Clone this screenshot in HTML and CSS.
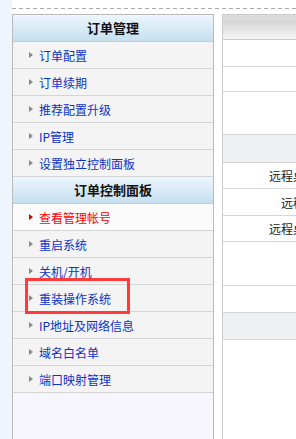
FILE: index.html
```html
<!DOCTYPE HTML>
<html lang="zh-CN">
<head>
  <meta http-equiv="Content-Type" content="text/html;charset=UTF-8">
  <title>订单管理</title>
  <link rel="stylesheet" href="styles.css">
</head>
<body>
  <div class="page">
    <div class="strip"></div>
    <div class="main">
      <div class="dash"></div>
      <div class="cols">
        <div class="menu">
          <div class="menu-head">订单管理</div>
          <a class="item" href="#">订单配置</a>
          <a class="item" href="#">订单续期</a>
          <a class="item" href="#">推荐配置升级</a>
          <a class="item" href="#">IP管理</a>
          <a class="item" href="#">设置独立控制面板</a>
          <div class="menu-head">订单控制面板</div>
          <a class="item current" href="#">查看管理帐号</a>
          <a class="item" href="#">重启系统</a>
          <a class="item" href="#">关机/开机</a>
          <a class="item" href="#">重装操作系统</a>
          <a class="item" href="#">IP地址及网络信息</a>
          <a class="item" href="#">域名白名单</a>
          <a class="item" href="#">端口映射管理</a>
          <div class="menu-fill"></div>
        </div>
        <div class="content">
          <div class="c-head"></div>
          <div class="c-row h26"></div>
          <div class="c-row h24"></div>
          <div class="c-row h42"></div>
          <div class="c-row h27 grey"></div>
          <div class="c-row h25"><span class="cell">远程桌面连接</span></div>
          <div class="c-row h26"><span class="cell">远程登录</span></div>
          <div class="c-row h25"><span class="cell">远程桌面连接</span></div>
          <div class="c-row h43"></div>
          <div class="c-row h26"></div>
          <div class="c-row h26 grey"></div>
        </div>
      </div>
    </div>
    <div class="mark"></div>
  </div>
</body>
</html>
```
FILE: styles.css
```css
body{
	padding: 0;
	margin: 0;
	background-color: #fff;
	font-family: "Noto Sans CJK SC", "Liberation Sans", sans-serif;
	font-size: 12px;
	overflow: hidden;
}
.page{
	position: relative;
	display: flex;
	height: 439px;
}
.strip{
	width: 12px;
	flex-shrink: 0;
	background-color: #eef5fc;
}
.main{
	flex: 1;
	min-width: 0;
}
.dash{
	margin-top: 8px;
	height: 1px;
	background: repeating-linear-gradient(to right, #aaa 0 4px, transparent 4px 7px);
}
.cols{
	display: flex;
	margin-top: 5px;
	height: 425px;
}
.menu{
	width: 200px;
	flex-shrink: 0;
	display: flex;
	flex-direction: column;
	border: 1px solid #bbb;
	border-bottom: none;
	background-color: #f4f4f4;
}
.menu-head{
	height: 26px;
	line-height: 26px;
	text-align: center;
	font-size: 13px;
	font-weight: bold;
	color: #111;
	border-bottom: 1px solid #b9cfdc;
	background: linear-gradient(#edf6fd, #c6dfef);
}
.item{
	display: flex;
	align-items: center;
	height: 26px;
	padding-left: 16px;
	color: #0a33c8;
	text-decoration: none;
	border-bottom: 1px solid #d4d4d4;
}
.item::before{
	content: "";
	width: 0;
	height: 0;
	margin-right: 6px;
	border-left: 4px solid #888;
	border-top: 3px solid transparent;
	border-bottom: 3px solid transparent;
}
.item.current{
	color: #f00;
	background-color: #fbfbfb;
}
.item.current::before{
	border-left-color: #d00;
}
.menu-fill{
	flex: 1;
	background-color: #f7f5fe;
}
.content{
	margin-left: 8px;
	width: 400px;
	flex-shrink: 0;
	border-left: 1px solid #ccc;
	border-top: 1px solid #ccc;
}
.c-head{
	height: 24px;
	border-bottom: 1px solid #ccc;
	background: linear-gradient(#dcdcdc 0, #dcdcdc 5px, #d6d6d6 6px, #f4f4f4);
}
.c-row{
	display: flex;
	align-items: center;
	border-bottom: 1px solid #d6d6d6;
	color: #222;
}
.c-row.grey{
	background-color: #eff0f2;
}
.cell{
	width: 164px;
	text-align: center;
}
.h24{ height: 24px; }
.h25{ height: 25px; }
.h26{ height: 26px; }
.h27{ height: 27px; }
.h42{ height: 42px; }
.h43{ height: 43px; }
.mark{
	position: absolute;
	left: 25px;
	top: 278px;
	width: 105px;
	height: 36px;
	box-sizing: border-box;
	border: 3px solid #ff3b3b;
}
```
